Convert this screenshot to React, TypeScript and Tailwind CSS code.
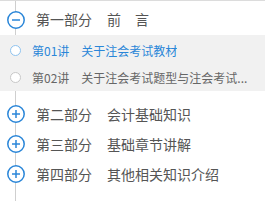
import React from 'react';

const font = { fontFamily: '"Noto Sans CJK SC", "Noto Sans", sans-serif' };

const lessons = [
  { no: '第01讲', title: '关于注会考试教材', active: true },
  { no: '第02讲', title: '关于注会考试题型与注会考试...', active: false },
];

const others = [
  { part: '第二部分', title: '会计基础知识' },
  { part: '第三部分', title: '基础章节讲解' },
  { part: '第四部分', title: '其他相关知识介绍' },
];

function ToggleIcon({ open }: { open: boolean }) {
  return (
    <svg width="18" height="18" viewBox="0 0 18 18" className="shrink-0">
      <circle cx="9" cy="9" r="8.2" fill="#fff" stroke="#2a86d8" strokeWidth="1.5" />
      <line x1="5" y1="9" x2="13" y2="9" stroke="#2a86d8" strokeWidth="1.5" />
      {!open && <line x1="9" y1="5" x2="9" y2="13" stroke="#2a86d8" strokeWidth="1.5" />}
    </svg>
  );
}

function SectionRow({ part, title, open, className = '' }: { part: string; title: string; open: boolean; className?: string }) {
  return (
    <div className={`flex items-center h-[30px] pl-[7px] ${className}`}>
      <ToggleIcon open={open} />
      <span className="ml-[11px] text-[14px] text-[#555] whitespace-nowrap">{part}</span>
      <span className="ml-[15px] text-[14px] text-[#555] whitespace-nowrap">{title}</span>
    </div>
  );
}

export default function App() {
  return (
    <div className="w-[265px] h-[201px] bg-white overflow-hidden" style={font}>
      <div className="relative h-full border-t border-[#dcdcdc]">
        {/* timeline line */}
        <div className="absolute left-[15px] top-0 bottom-0 w-px bg-[#cfcfcf]" />

        <div className="relative">
          <SectionRow part="第一部分" title="前　言" open className="mt-[3px] h-[31px]" />

          <div className="bg-[#f1f1f1] pt-[2px]">
            {lessons.map((l) => (
              <div key={l.no} className="flex items-center h-[27px] pl-[10px] pr-[14px]">
                <span
                  className={`w-[11px] h-[11px] shrink-0 rounded-full bg-white border-[1.5px] ${
                    l.active ? 'border-[#8ec3ef]' : 'border-[#c8c8c8]'
                  }`}
                />
                <span
                  className={`ml-[11px] text-[12px] whitespace-nowrap ${l.active ? 'text-[#2a86d8]' : 'text-[#666]'}`}
                >
                  {l.no}
                </span>
                <span
                  className={`ml-[12px] text-[12px] whitespace-nowrap truncate ${l.active ? 'text-[#2a86d8]' : 'text-[#666]'}`}
                >
                  {l.title}
                </span>
              </div>
            ))}
          </div>

          <div className="mt-[8px]">
            {others.map((s) => (
              <SectionRow key={s.part} part={s.part} title={s.title} open={false} />
            ))}
          </div>
        </div>
      </div>
    </div>
  );
}
